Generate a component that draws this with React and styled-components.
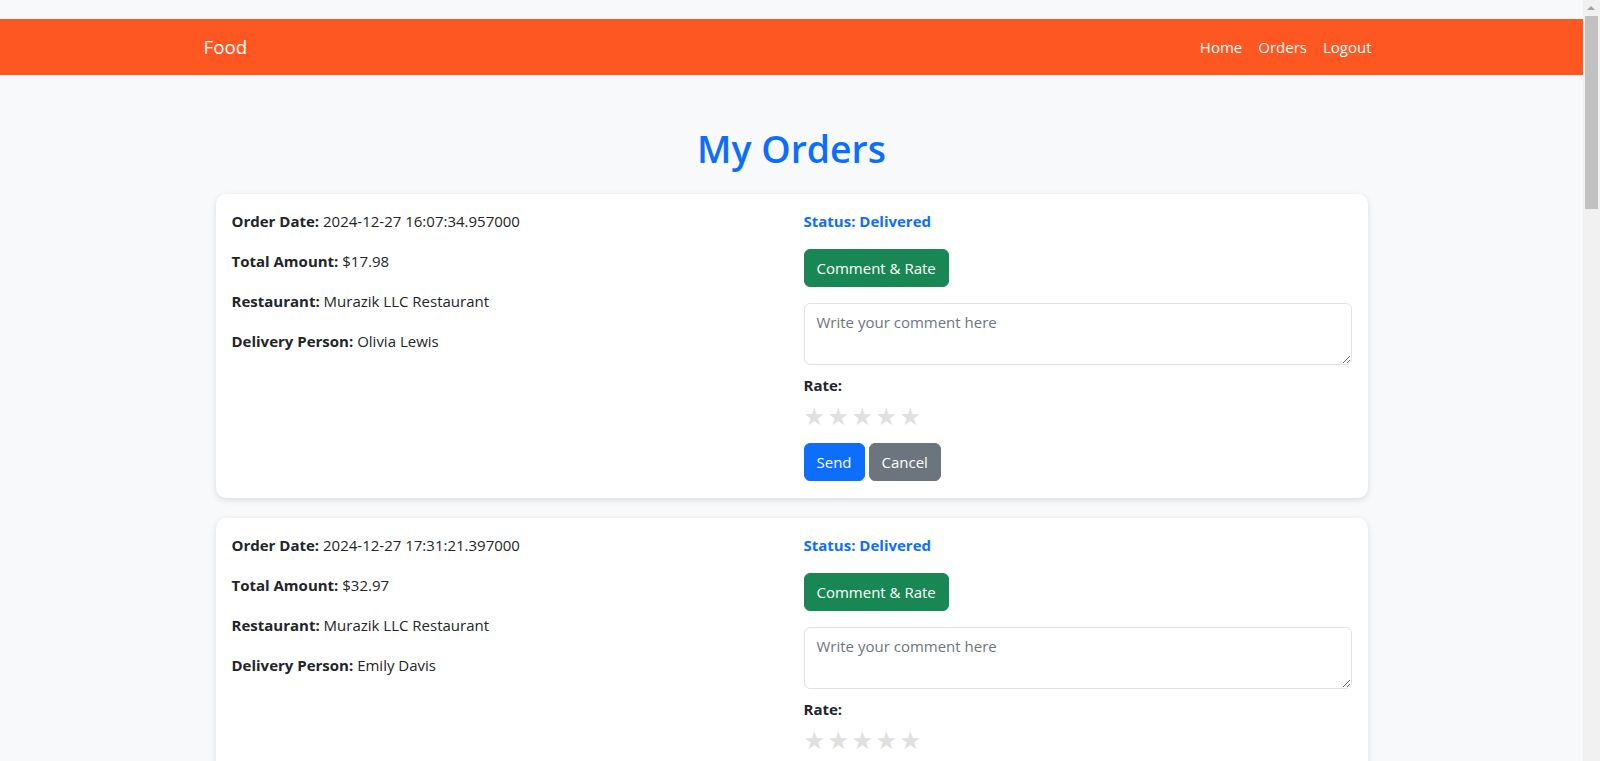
import React from 'react';
import styled, { createGlobalStyle } from 'styled-components';

const GlobalStyle = createGlobalStyle`
    * {
        box-sizing: border-box;
    }
    body {
        margin: 0;
        background-color: #f8f9fa;
        font-family: "Segoe UI", "Open Sans", "Noto Sans", sans-serif;
        font-size: 15px;
        line-height: 24px;
        color: #212529;
    }
`;

const Page = styled.div`
    padding-top: 19px;
    margin-right: 17px;
    min-height: 100vh;
`;

/* stand-in for the browser's vertical scrollbar seen in the screenshot */
const ScrollTrack = styled.div`
    position: fixed;
    top: 0;
    right: 0;
    width: 17px;
    height: 100vh;
    background-color: #f1f1f1;

    &::before {
        content: '';
        position: absolute;
        top: 6px;
        left: 4px;
        border-left: 4px solid transparent;
        border-right: 4px solid transparent;
        border-bottom: 4px solid #a3a3a3;
    }
`;

const ScrollThumb = styled.div`
    position: absolute;
    top: 16px;
    left: 2px;
    width: 13px;
    height: 193px;
    background-color: #c1c1c1;
`;

const Navbar = styled.nav`
    background-color: #ff5722;
    height: 56px;
    display: flex;
    align-items: center;
`;

const NavInner = styled.div`
    width: 1200px;
    margin: 0 auto;
    padding: 0 12px;
    display: flex;
    align-items: center;
    justify-content: space-between;
`;

const Brand = styled.a`
    color: #fff;
    font-size: 18.7px;
    line-height: 30px;
    text-decoration: none;
`;

const NavLinks = styled.ul`
    display: flex;
    list-style: none;
    margin: 0;
    padding: 0;

    a {
        display: block;
        padding: 8px;
        color: #fff;
        text-decoration: none;
    }
`;

const Main = styled.main`
    width: 1176px;
    margin: 0 auto;
    padding: 50px 12px 0;
`;

const Title = styled.h1`
    margin: 0 0 21px;
    text-align: center;
    font-size: 37.4px;
    font-weight: 600;
    line-height: 48px;
    color: #0d6efd;
`;

const Card = styled.div`
    background: #fff;
    border-radius: 10px;
    box-shadow: 0 2px 6px rgba(0, 0, 0, 0.12);
    padding: 15px 16px 17px;
    margin-bottom: 20px;
    display: grid;
    grid-template-columns: 1fr 1fr;
    column-gap: 24px;
`;

const Col = styled.div`
    display: flex;
    flex-direction: column;
    align-items: flex-start;

    p {
        margin: 0 0 16px;
    }
`;

const Status = styled.p`
    font-weight: 700;
    color: #0d6efd;
`;

const Button = styled.button`
    font-family: inherit;
    font-size: 15px;
    line-height: 24px;
    padding: 6px 12px;
    border: 1px solid ${props => props.$bg};
    border-radius: 6px;
    background-color: ${props => props.$bg};
    color: #fff;
    cursor: pointer;
`;

const CommentBox = styled.textarea`
    width: 100%;
    margin-top: 16px;
    padding: 6px 12px;
    font-family: inherit;
    font-size: 15px;
    line-height: 24px;
    color: #212529;
    border: 1px solid #dee2e6;
    border-radius: 6px;
    resize: vertical;
    display: block;

    &::placeholder {
        color: #6c757d;
    }
`;

const Label = styled.label`
    margin-top: 8px;
    font-weight: 700;
`;

const Stars = styled.div`
    display: flex;
    height: 36px;
    margin-bottom: 10px;
    padding-top: 4px;
    align-items: center;

    span {
        width: 24px;
        font-size: 24px;
        line-height: 1;
        color: #e0e0e0;
        font-family: "DejaVu Sans", sans-serif;
    }
`;

const Actions = styled.div`
    display: flex;
    gap: 4px;
`;

const orders = [
    {
        date: '2024-12-27 16:07:34.957000',
        amount: '$17.98',
        restaurant: 'Murazik LLC Restaurant',
        person: 'Olivia Lewis',
        status: 'Delivered',
    },
    {
        date: '2024-12-27 17:31:21.397000',
        amount: '$32.97',
        restaurant: 'Murazik LLC Restaurant',
        person: 'Emily Davis',
        status: 'Delivered',
    },
];

function OrderCard({ order }) {
    return (
        <Card>
            <Col>
                <p><strong>Order Date:</strong> {order.date}</p>
                <p><strong>Total Amount:</strong> {order.amount}</p>
                <p><strong>Restaurant:</strong> {order.restaurant}</p>
                <p><strong>Delivery Person:</strong> {order.person}</p>
            </Col>
            <Col>
                <Status>Status: {order.status}</Status>
                <Button $bg="#198754">Comment &amp; Rate</Button>
                <CommentBox rows={2} placeholder="Write your comment here" />
                <Label>Rate:</Label>
                <Stars>
                    {[1, 2, 3, 4, 5].map(n => <span key={n}>★</span>)}
                </Stars>
                <Actions>
                    <Button $bg="#0d6efd">Send</Button>
                    <Button $bg="#6c757d">Cancel</Button>
                </Actions>
            </Col>
        </Card>
    );
}

export default function App() {
    return (
        <Page>
            <GlobalStyle />
            <Navbar>
                <NavInner>
                    <Brand href="#">Food</Brand>
                    <NavLinks>
                        <li><a href="#">Home</a></li>
                        <li><a href="#">Orders</a></li>
                        <li><a href="#">Logout</a></li>
                    </NavLinks>
                </NavInner>
            </Navbar>
            <Main>
                <Title>My Orders</Title>
                {orders.map((o, i) => <OrderCard key={i} order={o} />)}
            </Main>
            <ScrollTrack>
                <ScrollThumb />
            </ScrollTrack>
        </Page>
    );
}
